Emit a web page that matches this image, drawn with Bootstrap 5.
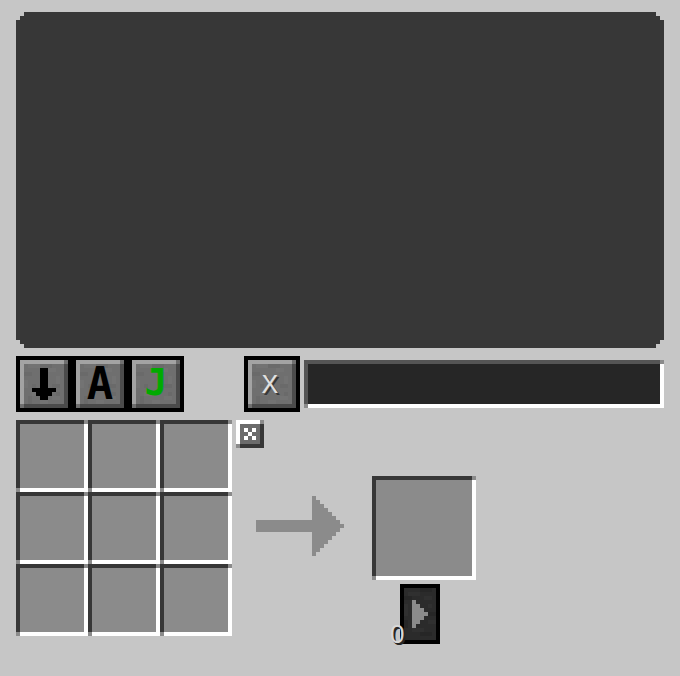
<!DOCTYPE html>
<html lang="en">
<head>
<meta charset="utf-8">
<meta name="viewport" content="width=device-width, initial-scale=1">
<title>Crafting Terminal</title>
<link href="https://cdn.jsdelivr.net/npm/bootstrap@5.3.0/dist/css/bootstrap.min.css" rel="stylesheet">
<style>
  body { background: #c6c6c6; font-family: "Liberation Sans", Arial, sans-serif; }
  .terminal { padding: 12px 16px; gap: 8px; }
  svg { shape-rendering: crispEdges; display: block; }
  .screen {
    height: 336px; background: #373737;
    clip-path: polygon(8px 0, calc(100% - 8px) 0, calc(100% - 8px) 4px, calc(100% - 4px) 4px, calc(100% - 4px) 8px, 100% 8px,
      100% calc(100% - 8px), calc(100% - 4px) calc(100% - 8px), calc(100% - 4px) calc(100% - 4px), calc(100% - 8px) calc(100% - 4px), calc(100% - 8px) 100%,
      8px 100%, 8px calc(100% - 4px), 4px calc(100% - 4px), 4px calc(100% - 8px), 0 calc(100% - 8px), 0 8px, 4px 8px, 4px 4px, 8px 4px);
  }
  .stone-btn, .craft-btn { border: 4px solid #000; padding: 0; border-radius: 0; position: relative; flex: none; }
  .stone-btn { width: 56px; height: 56px; background: #6f6f6f; }
  .stone-btn .face, .craft-btn .face { position: absolute; inset: 0; }
  .glyph { position: absolute; inset: 0; display: flex; align-items: center; justify-content: center; line-height: 1; }
  .pixel-bold { font-family: "DejaVu Sans Mono", monospace; font-weight: 700; }
  .glyph-a { font-size: 44px; color: #000; }
  .glyph-j { font-size: 38px; color: #0a0; padding-bottom: 4px; }
  .glyph-x { font-family: "Liberation Mono", monospace; font-size: 28px; color: #e0e0e0; text-shadow: 2px 2px #383838; padding: 4px 4px 0 0; }
  .tools { gap: 4px; }
  .clear-btn { margin-left: 56px; }
  /* Sunken boxes: square caps where the dark and light edges meet */
  .sunk {
    --edge: #373737; --fill: #8b8b8b; border: 0; border-radius: 0; background:
      linear-gradient(#8b8b8b, #8b8b8b) right top / 4px 4px no-repeat,
      linear-gradient(#8b8b8b, #8b8b8b) left bottom / 4px 4px no-repeat,
      linear-gradient(#fff, #fff) right top / 4px 100% no-repeat,
      linear-gradient(#fff, #fff) left bottom / 100% 4px no-repeat,
      linear-gradient(var(--edge), var(--edge)) left top / 100% 4px no-repeat,
      linear-gradient(var(--edge), var(--edge)) left top / 4px 100% no-repeat,
      var(--fill);
  }
  .search { --edge: #555; --fill: #262626; height: 48px; min-width: 0; padding: 4px 12px; color: #fff; outline: 0; }
  .slots { display: grid; grid-template-columns: repeat(3, 72px); grid-auto-rows: 72px; }
  .empty-btn { border: 0; padding: 0; background: none; }
  .transfer { margin-left: 4px; gap: 48px; }
  .arrow { margin-left: 20px; }
  .output { margin: 56px 0 0 28px; gap: 4px; }
  .result { width: 104px; height: 104px; }
  .craft-btn { width: 40px; height: 60px; margin-left: 28px; background: #2b2b2b; }
  .count { position: absolute; left: -14px; bottom: -8px; font-size: 26px; line-height: 28px; font-family: "Liberation Sans", sans-serif; color: #d8d8d8; text-shadow: 2px 2px #262626, 1px 1px #262626; }
</style>
<script src="https://cdn.jsdelivr.net/npm/bootstrap@5.3.0/dist/js/bootstrap.bundle.min.js"></script>
</head>
<body>
<svg width="0" height="0" class="position-absolute" aria-hidden="true">
  <symbol id="stone" viewBox="0 0 12 12">
    <path fill="#6f6f6f" d="M0 0h12v12H0z"/>
    <path fill="#737373" d="M2 1h3v1H2zM7 2h2v1H7zM9 4h1v2H9zM1 5h1v2H1zM3 8h2v1H3zM8 9h2v1H8zM5 10h2v1H5z"/>
    <path fill="#6a6a6a" d="M5 1h3v1H5zM1 3h2v1H1zM8 6h2v1H8zM2 9h1v2H2zM9 8h1v1H9zM3 6h1v1H3z"/>
    <path fill="#a3a3a3" d="M0 0h11v1H1v10H0z"/>
    <path fill="#4b4b4b" d="M11 1h1v11H1v-1h10z"/>
    <path fill="#707070" d="M11 0h1v1h-1zM0 11h1v1H0zM10 10h1v1h-1z"/>
  </symbol>
</svg>
<main class="terminal container-fluid d-flex flex-column">
  <section class="screen" aria-label="Items"></section>

  <div class="tools d-flex align-items-center">
    <div class="d-flex">
      <button type="button" class="stone-btn" aria-label="Sort direction">
        <svg class="face" width="48" height="48" viewBox="0 0 12 12"><use href="#stone"/><path d="M5 2h2v5h2v1H8v1H7v1H5V9H4V8H3V7h2z"/></svg>
      </button>
      <button type="button" class="stone-btn" aria-label="Sort by name, A">
        <svg class="face" width="48" height="48"><use href="#stone"/></svg><span class="glyph pixel-bold glyph-a">A</span>
      </button>
      <button type="button" class="stone-btn" aria-label="Search sync, J">
        <svg class="face" width="48" height="48"><use href="#stone"/></svg><span class="glyph pixel-bold glyph-j">J</span>
      </button>
    </div>
    <button type="button" class="stone-btn clear-btn" aria-label="Clear search, X">
      <svg class="face" width="48" height="48"><use href="#stone"/></svg><span class="glyph glyph-x">X</span>
    </button>
    <input type="text" class="sunk search flex-grow-1" aria-label="Search">
  </div>

  <div class="d-flex align-items-start">
    <div class="slots flex-shrink-0" aria-label="Crafting grid">
      <div class="sunk"></div><div class="sunk"></div><div class="sunk"></div>
      <div class="sunk"></div><div class="sunk"></div><div class="sunk"></div>
      <div class="sunk"></div><div class="sunk"></div><div class="sunk"></div>
    </div>
    <div class="transfer d-flex flex-column align-items-start">
      <button type="button" class="empty-btn" aria-label="Empty grid">
        <svg width="28" height="28" viewBox="0 0 7 7">
          <path fill="#6b6b6b" d="M0 0h7v7H0z"/>
          <path fill="#fff" d="M0 0h6v1H1v5H0zM2 2h1v1H2zM4 2h1v1H4zM3 3h1v1H3zM2 4h1v1H2zM4 4h1v1H4z"/>
          <path fill="#373737" d="M6 1h1v6H1V6h5z"/>
          <path fill="#8b8b8b" d="M6 0h1v1H6zM0 6h1v1H0z"/>
        </svg>
      </button>
      <svg class="arrow" width="88" height="60" viewBox="0 0 22 15" aria-hidden="true">
        <path fill="#8b8b8b" d="M0 6h14V0h1v1h1v1h1v1h1v1h1v1h1v1h1v1h1v1h-1v1h-1v1h-1v1h-1v1h-1v1h-1v1h-1v1h-1V9H0z"/>
      </svg>
    </div>
    <div class="output d-flex flex-column align-items-start">
      <div class="sunk result" aria-label="Result"></div>
      <button type="button" class="craft-btn" aria-label="Craft, 0">
        <svg class="face" width="32" height="52" viewBox="0 0 8 13">
          <path fill="#2b2b2b" d="M0 0h8v13H0z"/>
          <path fill="#303030" d="M1 1h3v1H1zM5 2h2v1H5zM0 4h1v3H0zM6 8h2v1H6zM2 10h3v1H2zM6 4h1v1H6z"/>
          <path fill="#262626" d="M4 0h3v1H4zM0 2h2v1H0zM6 6h2v1H6zM4 11h3v1H4zM0 8h1v2H0z"/>
          <path fill="#8b8b8b" d="M2 3h1v1h1v1h1v1h1v1H5v1H4v1H3v1H2z"/>
        </svg>
        <span class="count">0</span>
      </button>
    </div>
  </div>
</main>
</body>
</html>
